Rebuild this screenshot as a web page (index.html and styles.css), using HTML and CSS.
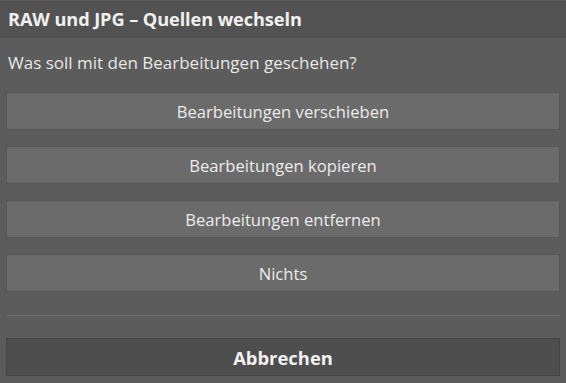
FILE: index.html
```html
<!DOCTYPE html>
<html lang="de">
<head>
<meta charset="utf-8">
<title>RAW und JPG – Quellen wechseln</title>
<link rel="stylesheet" href="styles.css">
</head>
<body>
<div class="dialog">
  <div class="titlebar">RAW und JPG – Quellen wechseln</div>
  <div class="content">
    <p class="question">Was soll mit den Bearbeitungen geschehen?</p>
    <div class="options">
      <button class="btn">Bearbeitungen verschieben</button>
      <button class="btn">Bearbeitungen kopieren</button>
      <button class="btn">Bearbeitungen entfernen</button>
      <button class="btn">Nichts</button>
    </div>
    <hr class="sep">
    <button class="btn cancel">Abbrechen</button>
  </div>
</div>
</body>
</html>
```
FILE: styles.css
```css
html, body {
  margin: 0;
  padding: 0;
  background: #5c5c5c;
}
body {
  width: 566px;
  height: 383px;
  overflow: hidden;
  font-family: "Open Sans", "Noto Sans", sans-serif;
  color: #e8e8e8;
}
.dialog {
  display: flex;
  flex-direction: column;
  height: 383px;
}
.titlebar {
  height: 38px;
  box-sizing: border-box;
  background: #525252;
  border-top: 1px solid #5a5a5a;
  padding: 0 8px 1px;
  display: flex;
  align-items: center;
  font-weight: 700;
  font-size: 18.2px;
  letter-spacing: -0.1px;
  color: #f0f0f0;
}
.content {
  padding: 0 6px;
  display: flex;
  flex-direction: column;
}
.question {
  margin: 0;
  height: 54px;
  box-sizing: border-box;
  padding: 0 0 5px 2px;
  display: flex;
  align-items: center;
  font-size: 17px;
  color: #e8e8e8;
}
.options {
  display: flex;
  flex-direction: column;
  gap: 16px;
}
.btn {
  height: 38px;
  width: 100%;
  box-sizing: border-box;
  background: #6b6b6b;
  border: 1px solid #555555;
  font-family: inherit;
  font-size: 16.6px;
  color: #ececec;
  padding: 0;
  margin: 0;
}
.sep {
  border: 0;
  height: 1px;
  background: #6a6a6a;
  margin: 23px 0 22px;
}
.cancel {
  background: #4e4e4e;
  border-color: #454545;
  font-weight: 700;
  font-size: 18.4px;
  color: #f2f2f2;
}
```
